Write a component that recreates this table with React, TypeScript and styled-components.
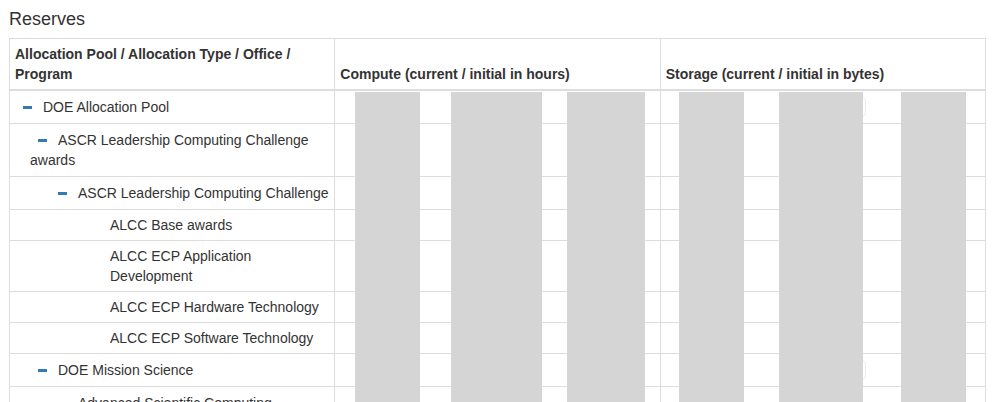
import React from 'react';
import styled, { createGlobalStyle } from 'styled-components';

const Global = createGlobalStyle`
  html, body { margin: 0; padding: 0; overflow: hidden; background: #fff; }
  body {
    font-family: "Liberation Sans", Arial, Helvetica, sans-serif;
    font-size: 14px;
    line-height: 20px;
    color: #333;
  }
`;

const Page = styled.div`
  padding: 8px 9px 0;
`;

const Title = styled.h3`
  margin: 0 0 8px;
  font-size: 18px;
  font-weight: 400;
  line-height: 22px;
  color: #333;
`;

const TableWrap = styled.div`
  position: relative;
`;

const Table = styled.table`
  width: 100%;
  border-collapse: collapse;
  border-spacing: 0;
  table-layout: fixed;
  border: 1px solid #ddd;
`;

const Th = styled.th`
  padding: 5px;
  border: 1px solid #ddd;
  border-bottom: 2px solid #ddd;
  text-align: left;
  vertical-align: bottom;
  font-weight: 700;
  line-height: 20px;
`;

const Td = styled.td<{ $pad?: number; $vpad: number }>`
  padding: ${(p) => p.$vpad}px 5px ${(p) => p.$vpad}px ${(p) => p.$pad ?? 5}px;
  border: 1px solid #ddd;
  vertical-align: top;
  line-height: 20px;
`;

const Toggle = styled.span`
  display: inline-block;
  width: 9px;
  height: 3px;
  margin: 0 11px 0 8px;
  background: #337ab7;
  vertical-align: middle;
  position: relative;
  top: -1px;
`;

const Ghost = styled.div`
  margin-left: 115px;
  width: 85px;
  height: 20px;
  box-sizing: border-box;
  border: 1px solid #ececec;
  border-radius: 4px;
`;

const Overlay = styled.div`
  position: absolute;
  top: 54px;
  left: 0;
  right: 0;
  bottom: 0;
  display: grid;
  grid-template-columns: 325px 325px 1fr;
  pointer-events: none;
`;

const Lane = styled.div`
  display: flex;
  align-items: stretch;
`;

const Bar = styled.div<{ $w: number; $ml: number }>`
  width: ${(p) => p.$w}px;
  margin-left: ${(p) => p.$ml}px;
  background: #d5d5d5;
  flex: none;
`;

type Row = { label: string; pad: number; toggle: boolean; ghost?: boolean };

const rows: Row[] = [
  { label: 'DOE Allocation Pool', pad: 5, toggle: true, ghost: true },
  { label: 'ASCR Leadership Computing Challenge awards', pad: 20, toggle: true },
  { label: 'ASCR Leadership Computing Challenge', pad: 40, toggle: true },
  { label: 'ALCC Base awards', pad: 100, toggle: false },
  { label: 'ALCC ECP Application Development', pad: 100, toggle: false },
  { label: 'ALCC ECP Hardware Technology', pad: 100, toggle: false },
  { label: 'ALCC ECP Software Technology', pad: 100, toggle: false },
  { label: 'DOE Mission Science', pad: 20, toggle: true, ghost: true },
  { label: 'Advanced Scientific Computing Research', pad: 40, toggle: true },
  { label: 'ASCR Discretionary', pad: 100, toggle: false },
  { label: 'ASCR Base awards', pad: 100, toggle: false },
];

const computeBars = [
  { w: 65, ml: 21 },
  { w: 91, ml: 31 },
  { w: 78, ml: 25 },
];

const storageBars = [
  { w: 65, ml: 20 },
  { w: 84, ml: 35 },
  { w: 65, ml: 38 },
];

export default function App() {
  return (
    <>
      <Global />
      <Page>
        <Title>Reserves</Title>
        <TableWrap>
          <Table>
            <thead>
              <tr>
                <Th>Allocation Pool / Allocation Type / Office / Program</Th>
                <Th>Compute (current / initial in hours)</Th>
                <Th>Storage (current / initial in bytes)</Th>
              </tr>
            </thead>
            <tbody>
              {rows.map((r) => {
                const v = r.toggle ? 6 : 5;
                return (
                  <tr key={r.label}>
                    <Td $pad={r.pad} $vpad={v}>
                      {r.toggle && <Toggle />}
                      {r.label}
                    </Td>
                    <Td $vpad={v} />
                    <Td $vpad={v}>{r.ghost && <Ghost />}</Td>
                  </tr>
                );
              })}
            </tbody>
          </Table>
          <Overlay>
            <div />
            <Lane>
              {computeBars.map((b, i) => (
                <Bar key={i} $w={b.w} $ml={b.ml} />
              ))}
            </Lane>
            <Lane>
              {storageBars.map((b, i) => (
                <Bar key={i} $w={b.w} $ml={b.ml} />
              ))}
            </Lane>
          </Overlay>
        </TableWrap>
      </Page>
    </>
  );
}
